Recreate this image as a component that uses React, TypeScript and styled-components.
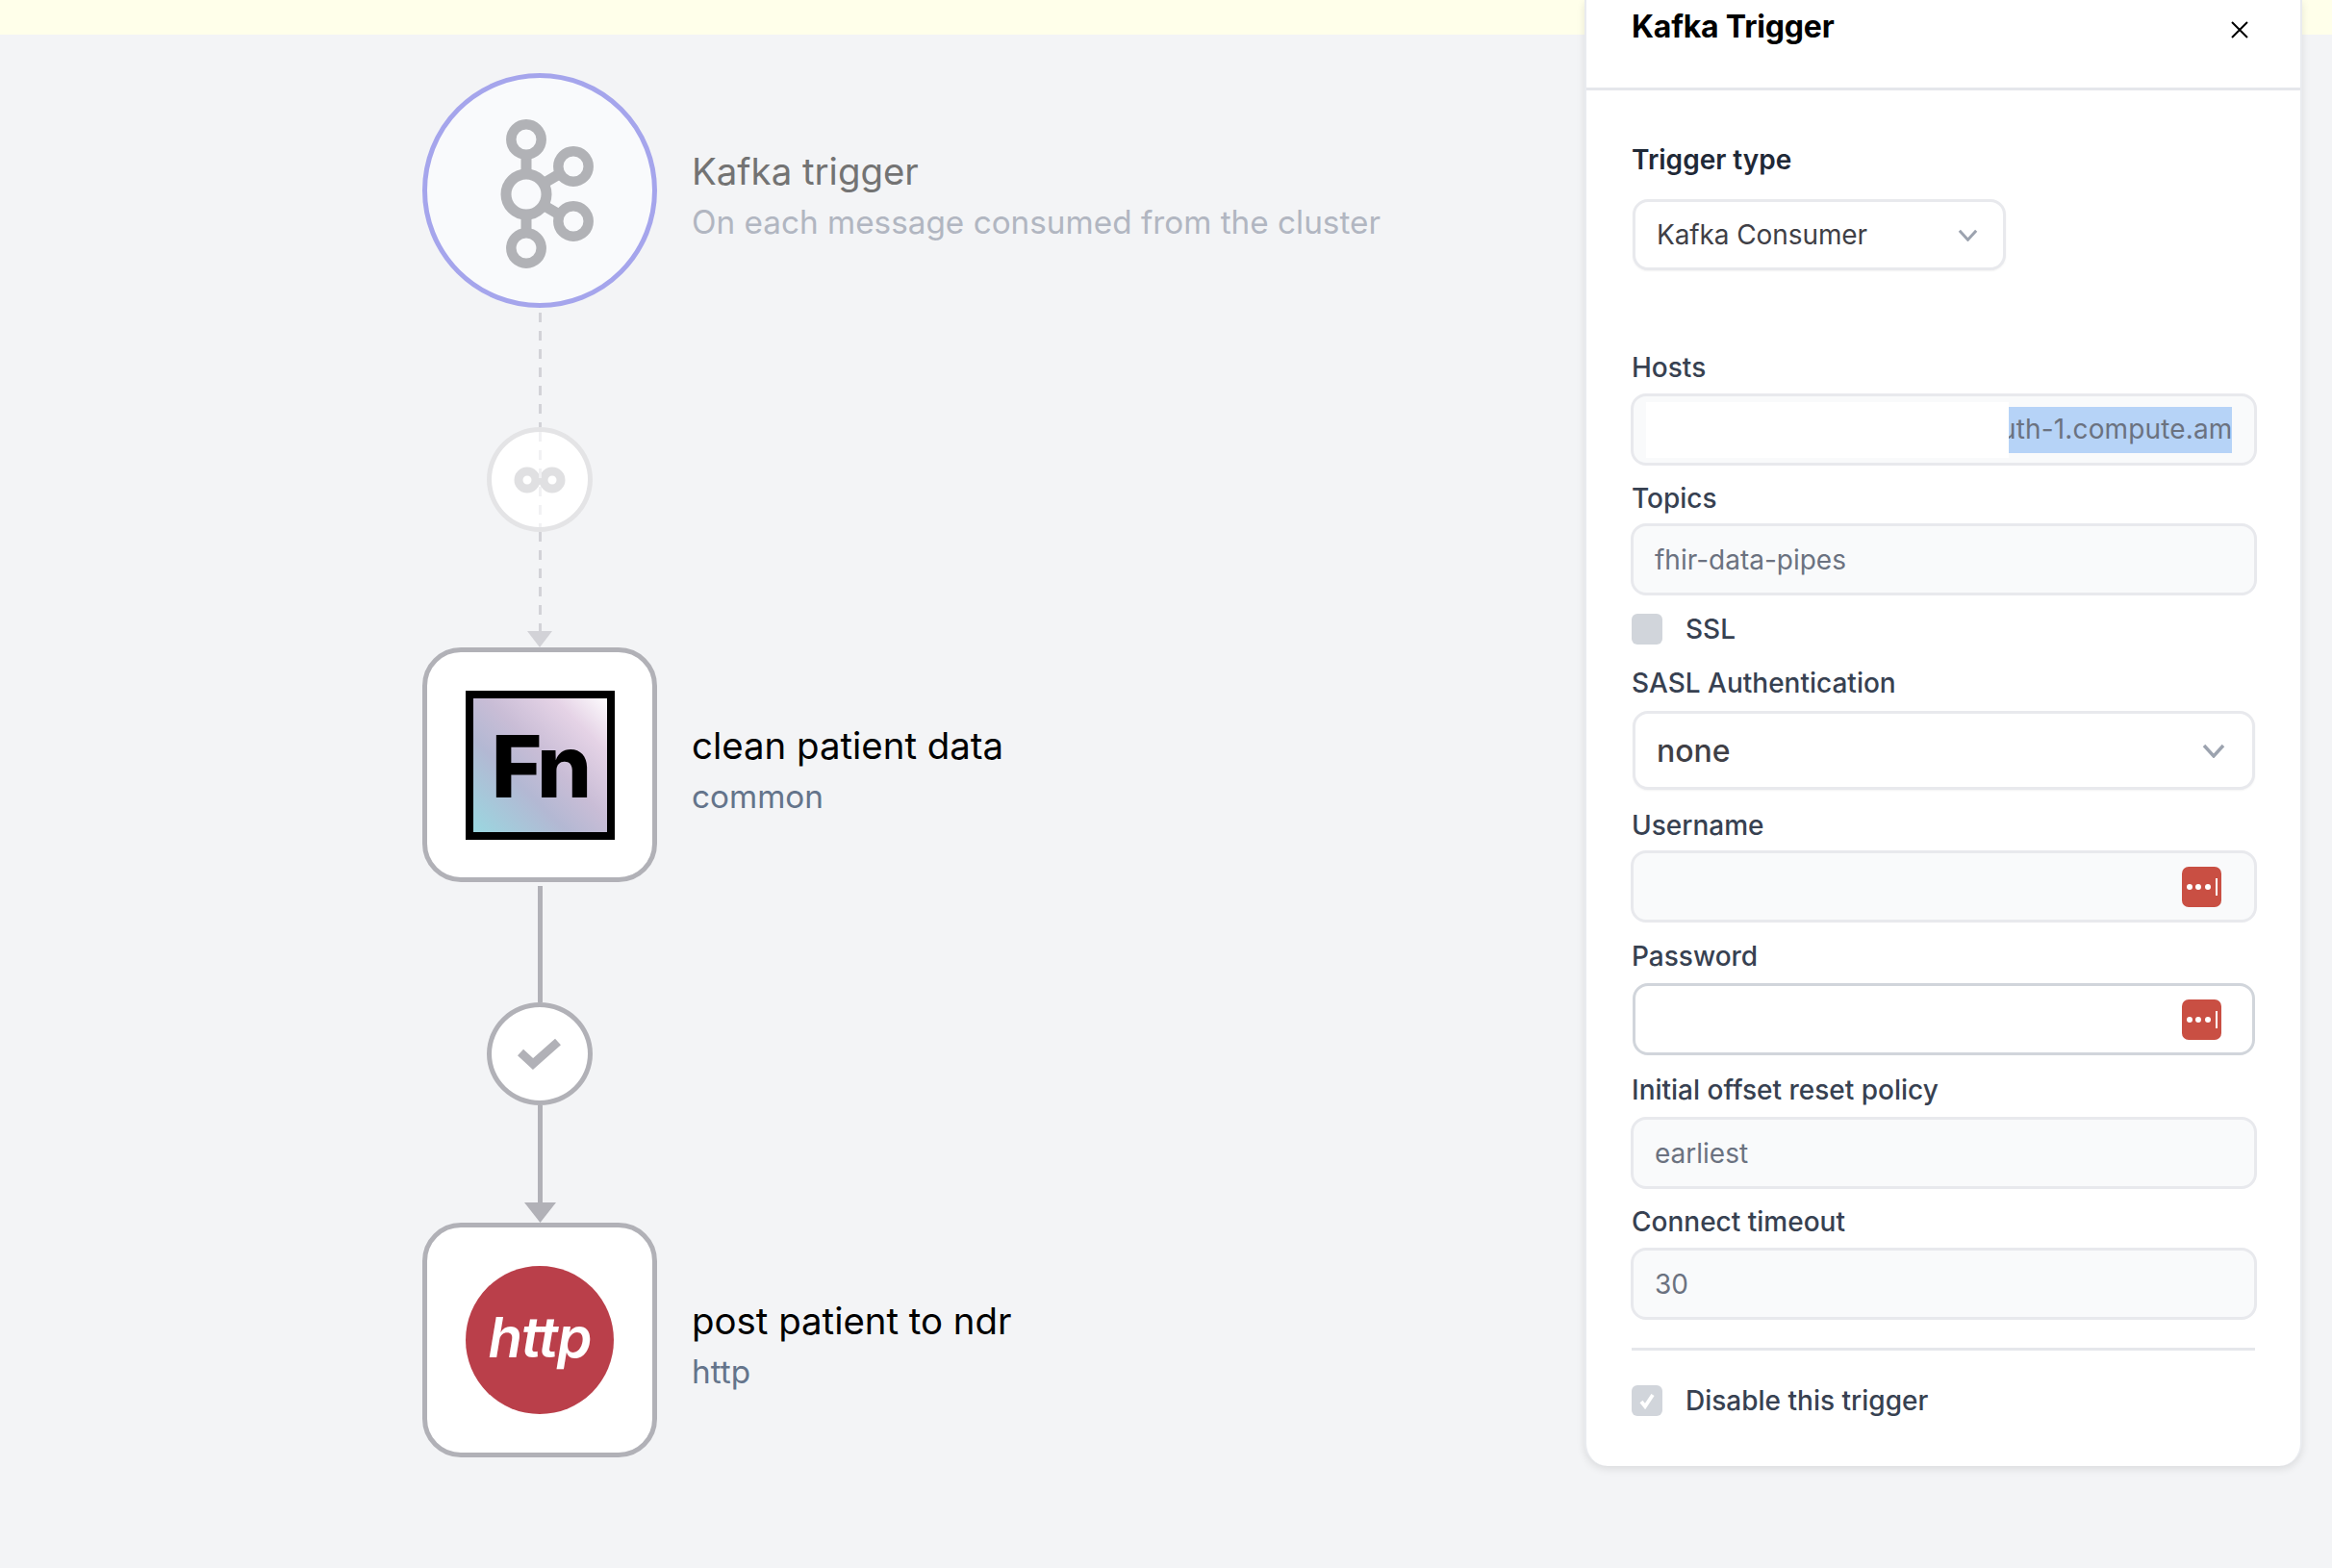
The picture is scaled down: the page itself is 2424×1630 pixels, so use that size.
import React from "react";
import styled, { createGlobalStyle } from "styled-components";

const GlobalStyle = createGlobalStyle`
  html, body {
    margin: 0;
    padding: 0;
    background: #f3f4f6;
    font-family: Inter, "Noto Sans", sans-serif;
    overflow: hidden;
  }
  * { box-sizing: border-box; }
`;

const Page = styled.div`
  position: relative;
  width: 2424px;
  height: 1630px;
  overflow: hidden;
  background: #f3f4f6;
`;

const Banner = styled.div`
  height: 36px;
  background: #ffffea;
`;

// DIAGRAM
const Flow = styled.div`
  display: flex;
  flex-direction: column;
  padding: 40px 0 0 439px;
`;

const Step = styled.div`
  display: flex;
  align-items: center;
  gap: 36px;
`;

const TriggerNode = styled.div`
  width: 244px;
  height: 244px;
  flex-shrink: 0;
  border-radius: 50%;
  border: 5px solid #a5a5ec;
  background: #f9fafc;
`;

const JobNode = styled.div`
  width: 244px;
  height: 244px;
  flex-shrink: 0;
  border-radius: 40px;
  border: 5px solid #b1b1b7;
  background: #fff;
  display: flex;
  align-items: center;
  justify-content: center;
`;

const FnIcon = styled.div`
  width: 155px;
  height: 155px;
  padding-top: 4px;
  border: 8px solid #000;
  background: linear-gradient(45deg, #9ad7e0 0%, #b3b8d3 35%, #c9bdd6 55%, #e5d3e6 80%, #fdfbfd 100%);
  display: flex;
  align-items: center;
  justify-content: center;
  color: #000;
  font-family: Inter, sans-serif;
  font-weight: 800;
  font-size: 90px;
  line-height: 1;
  letter-spacing: -4px;
`;

const HttpIcon = styled.div`
  width: 154px;
  height: 154px;
  padding-bottom: 6px;
  border-radius: 50%;
  background: #ba3f4a;
  display: flex;
  align-items: center;
  justify-content: center;
  color: #fff;
  font-family: Inter, sans-serif;
  font-style: italic;
  font-weight: 600;
  font-size: 58px;
  line-height: 1;
  letter-spacing: -1px;
`;

const StepText = styled.div`
  display: flex;
  flex-direction: column;
  padding-top: 14px;
`;

const StepTitle = styled.div<{ $muted?: boolean }>`
  font-size: 38.4px;
  line-height: 53px;
  color: ${(p) => (p.$muted ? "#737373" : "#000")};
`;

const StepSub = styled.div<{ $muted?: boolean }>`
  font-size: 33.3px;
  line-height: 53px;
  color: ${(p) => (p.$muted ? "#b1b6c1" : "#64748b")};
`;

const Link = styled.div`
  width: 244px;
  display: flex;
  flex-direction: column;
  align-items: center;
`;

const Line = styled.div<{ $dashed?: boolean; $height: number; $top?: number }>`
  width: ${(p) => (p.$dashed ? 3 : 5)}px;
  height: ${(p) => p.$height}px;
  margin-top: ${(p) => p.$top ?? 0}px;
  background: ${(p) =>
    p.$dashed
      ? "repeating-linear-gradient(to bottom, #d2d2d7 0 10px, transparent 10px 19px)"
      : "#b1b1b7"};
`;

const Junction = styled.div<{ $faded?: boolean }>`
  position: relative;
  width: 110px;
  height: ${(p) => (p.$faded ? 109 : 107)}px;
  border-radius: 50%;
  border: ${(p) => (p.$faded ? "5px solid #e4e4e6" : "5px solid #b1b1b7")};
  background: #fff;
  display: flex;
  align-items: center;
  justify-content: center;
`;

const FaintDash = styled.div`
  position: absolute;
  top: 0;
  bottom: 0;
  left: 50%;
  width: 3px;
  margin-left: -1.5px;
  background: repeating-linear-gradient(to bottom, #f1f1f3 0 10px, transparent 10px 19px);
`;

const Arrow = styled.svg`
  display: block;
`;

// PANEL
const Panel = styled.aside`
  position: absolute;
  top: 0;
  left: 1647px;
  width: 746px;
  height: 1524px;
  background: #fff;
  border-left: 2px solid #e9ebef;
  border-right: 2px solid #e9ebef;
  border-radius: 0 0 24px 24px;
  box-shadow: 0 3px 8px rgba(0, 0, 0, 0.1);
`;

const PanelHeader = styled.header`
  height: 94px;
  border-bottom: 3px solid #e5e7eb;
  display: flex;
  align-items: flex-start;
  justify-content: space-between;
  padding: 8px 54px 0 47px;
`;

const PanelTitle = styled.h2`
  margin: 0;
  font-size: 32px;
  line-height: 40px;
  font-weight: 700;
  color: #000;
  letter-spacing: -0.2px;
`;

const CloseIcon = styled.svg`
  margin-top: 14px;
`;

const PanelBody = styled.div`
  display: flex;
  flex-direction: column;
  padding: 52px 45px 0 46px;
`;

const Label = styled.label<{ $top: number; $strong?: boolean; $after: number }>`
  display: block;
  margin: ${(p) => p.$top}px 0 ${(p) => p.$after}px 1px;
  font-size: 28px;
  line-height: 40px;
  font-weight: ${(p) => (p.$strong ? 600 : 500)};
  color: ${(p) => (p.$strong ? "#1f2937" : "#374151")};
`;

const InputBox = styled.div<{ $active?: boolean }>`
  height: 75px;
  border-radius: 16px;
  border: 3px solid ${(p) => (p.$active ? "#d1d5db" : "#e8e9ed")};
  background: ${(p) => (p.$active ? "#fff" : "#f9fafb")};
  display: flex;
  align-items: center;
  justify-content: space-between;
  padding: 0 22px;
  font-size: 28px;
  color: #6b7280;
  ${(p) => p.$active && "margin-left: 2px; width: 647px;"}
`;

const SecretBox = styled(InputBox)`
  justify-content: flex-end;
  padding-right: ${(p) => (p.$active ? 32 : 34)}px;
`;

const HostsBox = styled(InputBox)`
  padding: 4px 0 4px 13px;
  justify-content: flex-start;
`;

const Autofill = styled.div`
  width: 377px;
  height: 58px;
  background: #fff;
  flex-shrink: 0;
`;

const Selection = styled.div`
  width: 232px;
  height: 48px;
  background: #b6d3f7;
  overflow: hidden;
  white-space: nowrap;
  line-height: 46px;
`;

const SelectedText = styled.span`
  display: inline-block;
  margin-left: -9px;
  letter-spacing: 0.15px;
`;

const SelectBox = styled.div<{ $wide?: boolean }>`
  width: ${(p) => (p.$wide ? 647 : 388)}px;
  height: ${(p) => (p.$wide ? 82 : 74)}px;
  margin-left: 2px;
  border-radius: 16px;
  border: 3px solid #e8e9ed;
  background: #fff;
  box-shadow: 0 1px 2px rgba(0, 0, 0, 0.05);
  display: flex;
  align-items: center;
  justify-content: space-between;
  padding: 0 ${(p) => (p.$wide ? 28 : 26)}px 0 22px;
  font-size: ${(p) => (p.$wide ? 32 : 28)}px;
  font-weight: ${(p) => (p.$wide ? 500 : 400)};
  letter-spacing: ${(p) => (p.$wide ? 0 : -0.1)}px;
  color: #3f3f46;
`;

const CheckRow = styled.div<{ $top: number }>`
  display: flex;
  align-items: center;
  gap: 24px;
  margin: ${(p) => p.$top}px 0 0 1px;
  font-size: 28px;
  line-height: 32px;
  font-weight: 500;
  color: #374151;
`;

const CheckBox = styled.div`
  width: 32px;
  height: 32px;
  border-radius: 6px;
  background: #d1d5db;
  display: flex;
  align-items: center;
  justify-content: center;
`;

const Rule = styled.div`
  height: 3px;
  margin: 29px 2px 0 1px;
  background: #e5e7eb;
`;

const Chevron = ({ wide }: { wide?: boolean }) => (
  <svg width={wide ? 24 : 21} height={wide ? 15 : 13} viewBox="0 0 24 15" fill="none">
    <path d="M2 2l10 11L22 2" stroke="#9ca3af" strokeWidth="3.4" />
  </svg>
);

const PasswordBadge = () => (
  <svg width="41" height="42" viewBox="0 0 41 42">
    <rect width="41" height="42" rx="7" fill="#c94f43" />
    <circle cx="8" cy="21" r="3" fill="#fff" />
    <circle cx="17" cy="21" r="3" fill="#fff" />
    <circle cx="27" cy="21" r="3" fill="#fff" />
    <rect x="35" y="12" width="2" height="18" fill="#fff" />
  </svg>
);

const KafkaIcon = () => (
  <svg width="234" height="234" viewBox="444 81 234 234" fill="none" stroke="#b1b2b6">
    <path d="M547 160V185M547 220V245M566 190L583 180M566 214L583 224" strokeWidth="11" />
    <circle cx="547" cy="202" r="21" strokeWidth="11" />
    <circle cx="547" cy="145" r="15.7" strokeWidth="10.5" />
    <circle cx="547" cy="258" r="15.7" strokeWidth="10.5" />
    <circle cx="596" cy="173" r="15.7" strokeWidth="10.5" />
    <circle cx="596" cy="230" r="15.7" strokeWidth="10.5" />
  </svg>
);

const InfinityIcon = () => (
  <svg width="56" height="28" viewBox="0 0 56 28" fill="none" stroke="#e0e0e2" strokeWidth="9">
    <circle cx="15" cy="14" r="9" />
    <circle cx="41" cy="14" r="9" />
    <path d="M23 9l10 10M23 19l10-10" strokeWidth="6" />
  </svg>
);

const CheckIcon = () => (
  <svg width="46" height="38" viewBox="0 0 46 38" fill="none">
    <path d="M3 17l13 12L42 6" stroke="#b1b1b7" strokeWidth="9" />
  </svg>
);

type FieldProps = { label: string; top: number; after?: number; children: React.ReactNode };

const Field = ({ label, top, after = 7, children }: FieldProps) => (
  <>
    <Label $top={top} $after={after}>{label}</Label>
    {children}
  </>
);

export default function App() {
  return (
    <Page>
      <GlobalStyle />
      <Banner />
      <Flow>
        <Step>
          <TriggerNode>
            <KafkaIcon />
          </TriggerNode>
          <StepText>
            <StepTitle $muted>Kafka trigger</StepTitle>
            <StepSub $muted>On each message consumed from the cluster</StepSub>
          </StepText>
        </Step>
        <Link>
          <Line $dashed $height={119} $top={5} />
          <Junction $faded>
            <FaintDash />
            <InfinityIcon />
          </Junction>
          <Line $dashed $height={103} />
          <Arrow width="26" height="17" viewBox="0 0 26 17">
            <path d="M0 0h26L13 17z" fill="#d2d2d7" />
          </Arrow>
        </Link>
        <Step>
          <JobNode>
            <FnIcon>Fn</FnIcon>
          </JobNode>
          <StepText>
            <StepTitle>clean patient data</StepTitle>
            <StepSub>common</StepSub>
          </StepText>
        </Step>
        <Link>
          <Line $height={121} $top={4} />
          <Junction>
            <CheckIcon />
          </Junction>
          <Line $height={101} />
          <Arrow width="33" height="21" viewBox="0 0 33 21">
            <path d="M0 0h33L16.5 21z" fill="#b1b1b7" />
          </Arrow>
        </Link>
        <Step>
          <JobNode>
            <HttpIcon>http</HttpIcon>
          </JobNode>
          <StepText>
            <StepTitle>post patient to ndr</StepTitle>
            <StepSub>http</StepSub>
          </StepText>
        </Step>
      </Flow>

      <Panel>
        <PanelHeader>
          <PanelTitle>Kafka Trigger</PanelTitle>
          <CloseIcon width="18" height="18" viewBox="0 0 18 18">
            <path d="M1 1l16 16M17 1L1 17" stroke="#000" strokeWidth="2" fill="none" />
          </CloseIcon>
        </PanelHeader>
        <PanelBody>
          <Label $strong $top={0} $after={21}>Trigger type</Label>
          <SelectBox>
            Kafka Consumer
            <Chevron />
          </SelectBox>
          <Field label="Hosts" top={81}>
            <HostsBox>
              <Autofill />
              <Selection>
                <SelectedText>uth-1.compute.amazonaws.com</SelectedText>
              </Selection>
            </HostsBox>
          </Field>
          <Field label="Topics" top={14} after={6}>
            <InputBox>fhir-data-pipes</InputBox>
          </Field>
          <CheckRow $top={19}>
            <CheckBox />
            SSL
          </CheckRow>
          <Field label="SASL Authentication" top={20} after={9}>
            <SelectBox $wide>
              none
              <Chevron wide />
            </SelectBox>
          </Field>
          <Field label="Username" top={17} after={6}>
            <SecretBox>
              <PasswordBadge />
            </SecretBox>
          </Field>
          <Field label="Password" top={15} after={8}>
            <SecretBox $active>
              <PasswordBadge />
            </SecretBox>
          </Field>
          <Field label="Initial offset reset policy" top={16} after={8}>
            <InputBox>earliest</InputBox>
          </Field>
          <Field label="Connect timeout" top={14}>
            <InputBox>30</InputBox>
          </Field>
          <Rule />
          <CheckRow $top={36}>
            <CheckBox>
              <svg width="18" height="18" viewBox="0 0 18 18" fill="none">
                <path d="M3 10l4 5 8-12" stroke="#fff" strokeWidth="3.8" />
              </svg>
            </CheckBox>
            Disable this trigger
          </CheckRow>
        </PanelBody>
      </Panel>
    </Page>
  );
}
